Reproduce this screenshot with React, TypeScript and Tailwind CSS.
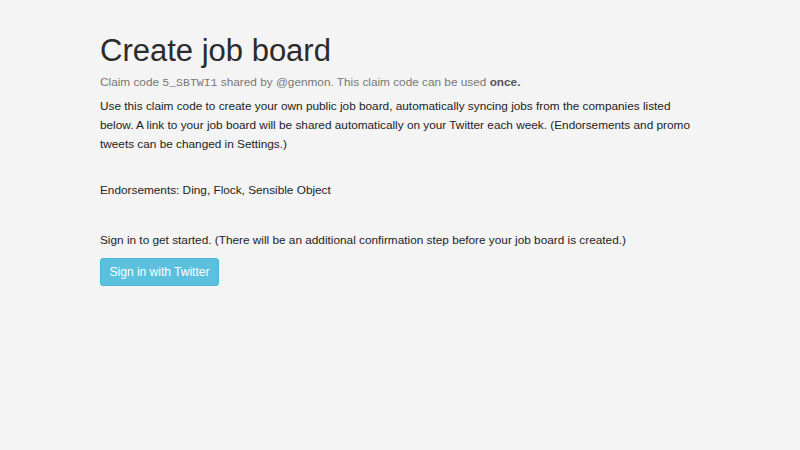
export default function App() {
  return (
    <div className="min-h-[450px] w-full bg-[#f4f4f4] text-[#222] [font-family:'Liberation_Sans',Arial,sans-serif]">
      <div className="pl-[100px] pr-[80px] pt-[32px]">
        <h1 className="text-[31px] leading-[38px] font-normal text-[#2b2b2b]">Create job board</h1>
        <p className="mt-[3px] text-[11.8px] leading-[19px] text-[#777]">
          Claim code <span className="[font-family:'Liberation_Mono',monospace] text-[11.5px]">5_SBTWI1</span> shared by @genmon. This claim code can be used <b className="text-[#555]">once.</b>
        </p>
        <p className="mt-[5px] text-[11.8px] leading-[19px] max-w-[605px]">
          Use this claim code to create your own public job board, automatically syncing jobs from the companies listed below. A link to your job board will be shared automatically on your Twitter each week. (Endorsements and promo tweets can be changed in Settings.)
        </p>
        <p className="mt-[27px] text-[11.8px] leading-[19px]">Endorsements: Ding, Flock, Sensible Object</p>
        <p className="mt-[31px] text-[11.8px] leading-[19px]">Sign in to get started. (There will be an additional confirmation step before your job board is created.)</p>
        <button className="mt-[8px] h-[28px] w-[119px] rounded-[3px] bg-[#5bc0de] border border-[#46b8da] text-white text-[12px]">Sign in with Twitter</button>
      </div>
    </div>
  );
}
